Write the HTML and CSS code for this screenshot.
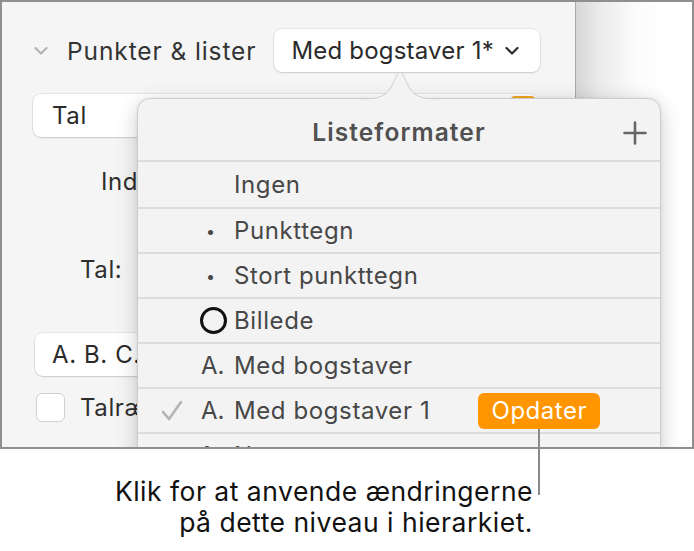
FILE: index.html
```html
<!DOCTYPE html>
<html lang="da">
<head>
<meta charset="utf-8">
<link rel="stylesheet" href="styles.css">
</head>
<body>
<div class="page">
  <div class="frame">
    <div class="sidebar">
      <div class="section-head">
        <svg class="disclosure" width="14" height="10" viewBox="0 0 14 10"><polyline points="1.5,2 7,7.5 12.5,2" fill="none" stroke="#b0b0b0" stroke-width="2" stroke-linecap="round" stroke-linejoin="round"/></svg>
        <span class="section-title">Punkter &amp; lister</span>
        <div class="popup">
          <span>Med bogstaver 1*</span>
          <svg width="14" height="10" viewBox="0 0 14 10"><polyline points="1.5,2 7,7.5 12.5,2" fill="none" stroke="#2b2b2b" stroke-width="2.2" stroke-linecap="round" stroke-linejoin="round"/></svg>
        </div>
      </div>
      <div class="field field-tal">
        <span>Tal</span>
        <span class="stepper"></span>
      </div>
      <div class="label label-ind">Indrykning:</div>
      <div class="label label-tal">Tal:</div>
      <div class="field field-abc"><span>A. B. C.</span></div>
      <div class="check-row">
        <span class="checkbox"></span>
        <span>Talrækkefølge</span>
      </div>
    </div>
    <div class="doc"></div>

    <div class="popover">
      <svg class="arrow" width="80" height="30" viewBox="0 0 80 30"><path d="M0,29.5 C16,29.5 24,27 30,19 L37,5 Q40,-0.5 43,5 L50,19 C56,27 64,29.5 80,29.5" fill="#f3f3f3" stroke="#cfcfcf" stroke-width="1"/><rect x="0" y="29.2" width="80" height="2" fill="#f3f3f3"/></svg>
      <div class="pop-head">
        <span class="pop-title">Listeformater</span>
        <svg class="plus" width="24" height="24" viewBox="0 0 24 24"><path d="M12 1.5V22.5M1.5 12H22.5" stroke="#666" stroke-width="2.6" stroke-linecap="round"/></svg>
      </div>
      <ul class="list">
        <li class="row first"><span class="check"></span><span class="marker"></span><span class="name">Ingen</span></li>
        <li class="row"><span class="check"></span><span class="marker bullet">•</span><span class="name">Punkttegn</span></li>
        <li class="row"><span class="check"></span><span class="marker bullet">•</span><span class="name">Stort punkttegn</span></li>
        <li class="row"><span class="check"></span><span class="marker"><span class="ring"></span></span><span class="name">Billede</span></li>
        <li class="row"><span class="check"></span><span class="marker">A.</span><span class="name">Med bogstaver</span></li>
        <li class="row"><span class="check"><svg width="24" height="24" viewBox="0 0 24 24"><polyline points="3,13 9,20 21,3" fill="none" stroke="#b4b4b4" stroke-width="2.6" stroke-linecap="round" stroke-linejoin="round"/></svg></span><span class="marker">A.</span><span class="name">Med bogstaver 1</span><span class="update">Opdater</span></li>
        <li class="row"><span class="check"></span><span class="marker">1.</span><span class="name">Nummereret</span></li>
      </ul>
    </div>
  </div>

  <div class="callout">
    <span class="callout-line"></span>
    <p class="callout-text">Klik for at anvende ændringerne<br>på dette niveau i hierarkiet.</p>
  </div>
</div>
</body>
</html>
```
FILE: styles.css
```css
* { box-sizing: border-box; }
html, body { margin: 0; padding: 0; background: #fff; }
body { font-family: "Inter", "Liberation Sans", sans-serif; color: #2e2e2e; }

.page { width: 694px; height: 551px; position: relative; }

.frame {
  position: relative;
  width: 694px;
  height: 449px;
  border: 2px solid #8f8f8f;
  display: flex;
  overflow: hidden;
  font-size: 24px;
  letter-spacing: 0.6px;
}

.sidebar {
  width: 574px;
  flex: none;
  background: #f5f5f5;
  border-right: 1px solid #a9a9a9;
  padding: 27px 0 0 31px;
}

.doc {
  flex: 1;
  background: linear-gradient(to right, #d6d6d6 0px, #ececec 25px, #fbfbfb 60px, #ffffff 90px);
}

.section-head {
  display: flex;
  align-items: center;
  height: 43px;
}
.disclosure { margin-left: 1px; flex: none; }
.section-title {
  font-size: 24.5px;
  margin-left: 19px;
  color: #333;
  letter-spacing: 0.9px;
  white-space: nowrap;
}
.popup {
  margin-left: 18px;
  width: 266px;
  flex: none;
  height: 43px;
  background: #fff;
  border-radius: 8px;
  box-shadow: 0 0 0 0.5px rgba(0,0,0,0.12), 0 1px 2px rgba(0,0,0,0.12);
  display: flex;
  align-items: center;
  padding: 0 21px 0 17px;
  color: #2a2a2a;
  justify-content: space-between;
  letter-spacing: 0.2px;
  white-space: nowrap;
}

.field {
  background: #fff;
  border-radius: 8px;
  box-shadow: 0 0 0 0.5px rgba(0,0,0,0.12), 0 1px 2px rgba(0,0,0,0.12);
  height: 43px;
  display: flex;
  align-items: center;
  color: #2a2a2a;
}
.field-tal {
  margin-top: 22px;
  width: 505px;
  padding-left: 19px;
  justify-content: space-between;
}
.stepper {
  width: 26px;
  height: 39px;
  background: #f5a623;
  border-radius: 5px;
  margin-right: 2px;
}
.label { color: #2e2e2e; }
.label-ind { margin: 30px 0 0 68px; }
.label-tal { margin: 59px 0 0 47px; }
.field-abc {
  margin-top: 49px;
  margin-left: 2px;
  width: 300px;
  padding-left: 17px;
}
.check-row {
  display: flex;
  align-items: center;
  margin-top: 17px;
  margin-left: 3px;
  white-space: nowrap;
}
.checkbox {
  width: 29px;
  height: 29px;
  border-radius: 6px;
  background: #fff;
  border: 1px solid #cfcfcf;
  margin-right: 15px;
  flex: none;
}

/* Popover */
.popover {
  position: absolute;
  left: 135px;
  top: 96px;
  width: 524px;
  height: 400px;
  background: #f3f3f3;
  border: 1px solid #cdcdcd;
  border-radius: 13px;
  box-shadow: 0 6px 22px rgba(0,0,0,0.2), 0 0 4px rgba(0,0,0,0.06);
}
.arrow {
  position: absolute;
  left: 222px;
  top: -29px;
}
.pop-head {
  height: 63px;
  display: flex;
  align-items: center;
  justify-content: center;
  position: relative;
  border-bottom: 2px solid #dcdcdc;
}
.pop-title {
  font-size: 24.5px;
  font-weight: 600;
  color: #505050;
  margin-top: 4px;
  letter-spacing: 1.1px;
}
.plus {
  position: absolute;
  right: 13px;
  top: 22px;
}
.list { list-style: none; margin: 0; padding: 0; }
.row {
  height: 45px;
  border-bottom: 2px solid #dcdcdc;
  display: flex;
  align-items: center;
  color: #474747;
  padding-left: 22px;
  white-space: nowrap;
}
.row.first { height: 47px; }
.check { width: 41px; height: 24px; flex: none; display: flex; align-items: center; }
.marker {
  width: 33px;
  flex: none;
  display: flex;
  align-items: center;
  letter-spacing: 0;
}
.bullet { padding-left: 5px; font-size: 16px; }
.ring {
  width: 27px;
  height: 27px;
  border: 3.5px solid #111;
  border-radius: 50%;
  margin-left: -1px;
}
.update {
  margin-left: 48px;
  width: 122px;
  height: 36px;
  flex: none;
  border-radius: 6px;
  background: #ff9500;
  color: #fff;
  display: flex;
  align-items: center;
  justify-content: center;
  letter-spacing: 0.5px;
}

/* Callout */
.callout {
  position: relative;
  width: 694px;
  padding-top: 27px;
}
.callout-line {
  position: absolute;
  left: 538px;
  top: -20px;
  width: 2px;
  height: 66px;
  background: #8a8a8a;
}
.callout-text {
  margin: 0;
  width: 533px;
  text-align: right;
  font-size: 26.5px;
  line-height: 31px;
  letter-spacing: 0.5px;
  color: #111;
}
```
